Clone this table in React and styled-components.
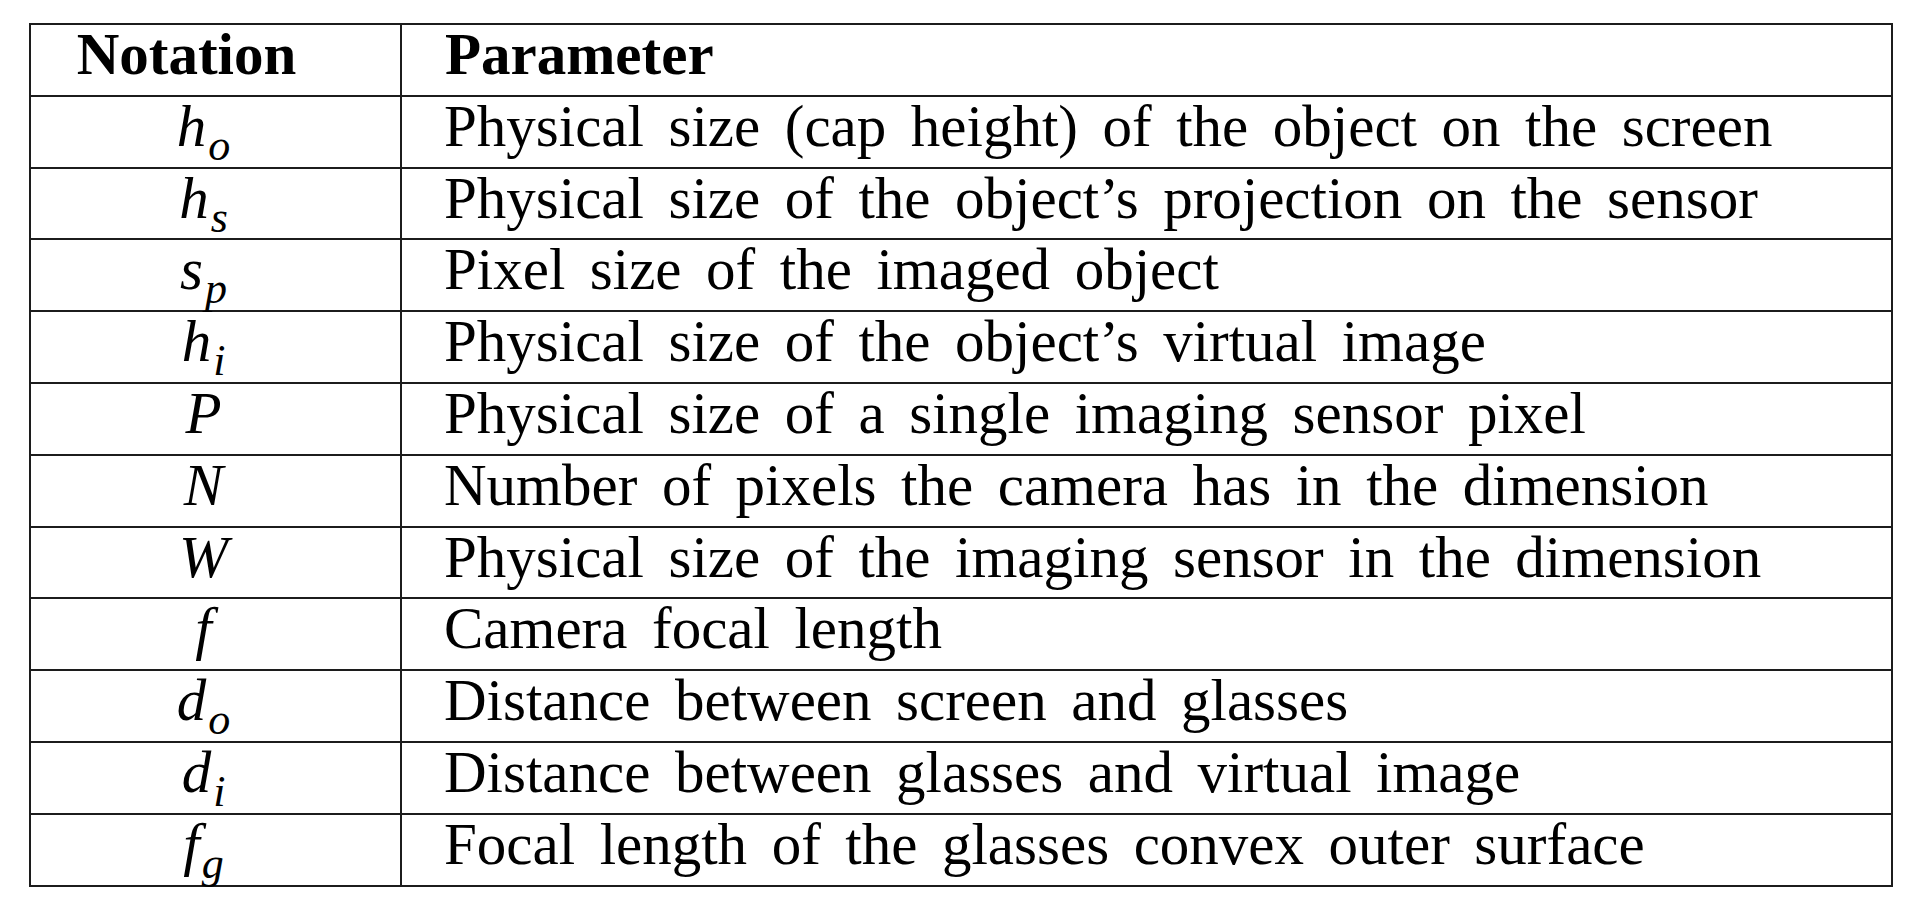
import React from 'react';
import styled, { createGlobalStyle } from 'styled-components';

const GlobalStyle = createGlobalStyle`
  html, body {
    margin: 0;
    padding: 0;
    background: #ffffff;
  }
  body {
    font-family: "Liberation Serif", serif;
    color: #000;
  }
`;

// 표에 들어갈 기호와 설명
const rows = [
  { sym: 'h', sub: 'o', text: 'Physical size (cap height) of the object on the screen' },
  { sym: 'h', sub: 's', text: 'Physical size of the object’s projection on the sensor' },
  { sym: 's', sub: 'p', text: 'Pixel size of the imaged object' },
  { sym: 'h', sub: 'i', text: 'Physical size of the object’s virtual image' },
  { sym: 'P', text: 'Physical size of a single imaging sensor pixel' },
  { sym: 'N', text: 'Number of pixels the camera has in the dimension' },
  { sym: 'W', text: 'Physical size of the imaging sensor in the dimension' },
  { sym: 'f', text: 'Camera focal length' },
  { sym: 'd', sub: 'o', text: 'Distance between screen and glasses' },
  { sym: 'd', sub: 'i', text: 'Distance between glasses and virtual image' },
  { sym: 'f', sub: 'g', text: 'Focal length of the glasses convex outer surface' },
];

function App() {
  return (
    <Page>
      <GlobalStyle />
      <Table>
        <colgroup>
          <col style={{ width: 371 }} />
          <col />
        </colgroup>
        <thead>
          <Row>
            <HeadCell $center>Notation</HeadCell>
            <HeadCell>Parameter</HeadCell>
          </Row>
        </thead>
        <tbody>
          {rows.map((r, i) => (
            <Row key={i}>
              <SymbolCell>
                <Sym>{r.sym}</Sym>
                {r.sub && <Sub>{r.sub}</Sub>}
              </SymbolCell>
              <TextCell>{r.text}</TextCell>
            </Row>
          ))}
        </tbody>
      </Table>
    </Page>
  );
}

export default App;

const Page = styled.div`
  padding: 23px 27px 0 29px;
  font-family: "Liberation Serif", serif;
`;

const Table = styled.table`
  width: 1864px;
  border-collapse: collapse;
  table-layout: fixed;
  border: 2px solid #1c1c1c;
  font-family: "Liberation Serif", serif;
`;

const Row = styled.tr`
  height: 71.8px;
`;

const Cell = styled.td`
  border: 2px solid #1c1c1c;
  height: 69.8px;
  padding: 0 0 0 42px;
  vertical-align: top;
  font-family: "Liberation Serif", serif;
  font-size: 59px;
  line-height: 59px;
  white-space: nowrap;
  word-spacing: 9.8px;
  box-sizing: border-box;
`;

const HeadCell = styled(Cell).attrs({ as: 'th' })`
  font-weight: bold;
  text-align: ${(props) => (props.$center ? 'center' : 'left')};
  padding: ${(props) => (props.$center ? '0 58px 0 0' : '0 0 0 43px')};
  word-spacing: normal;
`;

const SymbolCell = styled(Cell)`
  text-align: center;
  padding: 0 24px 0 0;
`;

const TextCell = styled(Cell)``;

const Sym = styled.span`
  font-style: italic;
`;

const Sub = styled.span`
  font-style: italic;
  font-size: 44px;
  position: relative;
  top: 14px;
  margin-left: 2px;
`;
